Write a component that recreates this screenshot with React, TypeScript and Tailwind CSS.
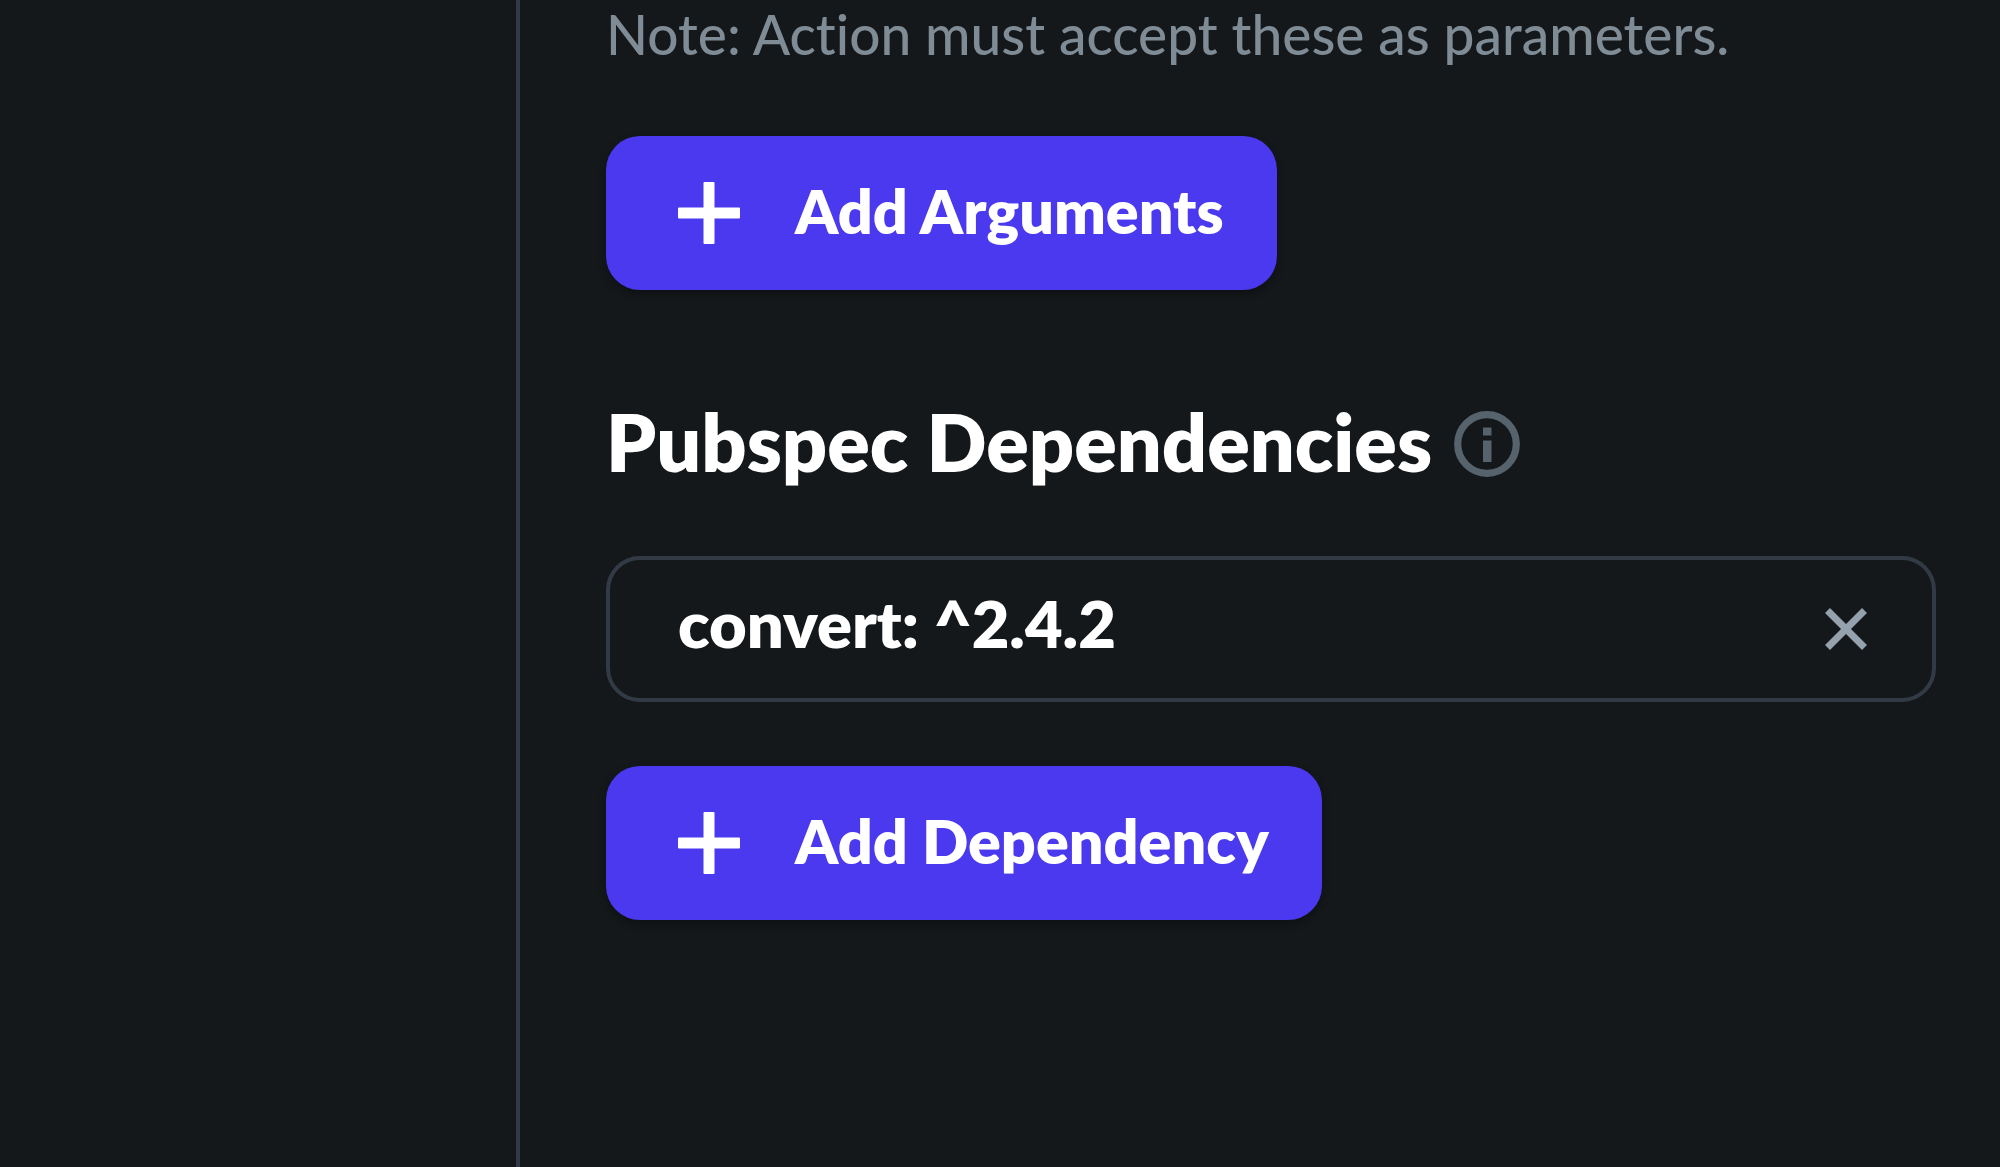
import { useState } from "react";

function PlusIcon() {
  return (
    <svg viewBox="0 0 62 62" className="size-[62px] shrink-0" fill="currentColor" aria-hidden="true">
      <rect x="0" y="25.5" width="62" height="11" rx="1" />
      <rect x="25.5" y="0" width="11" height="62" rx="1" />
    </svg>
  );
}

function AddButton({ label }: { label: string }) {
  return (
    <button
      type="button"
      className="flex h-[154px] items-center gap-[55px] rounded-[34px] bg-[#4b39ef] pr-[53px] pl-[72px] text-[61px] leading-[80px] font-extrabold whitespace-nowrap text-white shadow-[0_4px_8px_rgba(0,0,0,0.3)]"
    >
      <PlusIcon />
      <span className="pb-1">{label}</span>
    </button>
  );
}

function InfoIcon() {
  return (
    <svg viewBox="0 0 66 66" className="size-[66px]" aria-hidden="true">
      <circle cx="33" cy="33" r="29.3" fill="none" stroke="currentColor" strokeWidth="7.2" />
      <rect x="29" y="16.5" width="8.5" height="8" fill="currentColor" />
      <rect x="29" y="29.5" width="8.5" height="21.5" fill="currentColor" />
    </svg>
  );
}

function CloseIcon() {
  return (
    <svg viewBox="0 0 42 42" className="size-[42px]" aria-hidden="true">
      <path d="M2.5 2.5 39.5 39.5M39.5 2.5 2.5 39.5" fill="none" stroke="currentColor" strokeWidth="7" />
    </svg>
  );
}

export default function App() {
  const [dependency, setDependency] = useState("convert: ^2.4.2");

  return (
    <div className="flex min-h-screen bg-[#14181b] font-[Lato,sans-serif] [font-variant-ligatures:none]">
      <aside className="w-[516px] shrink-0" />
      <main className="flex min-w-0 flex-1 flex-col items-start border-l-4 border-[#323b45] pr-16 pl-[86px]">
        <p className="text-[55px] leading-[68px] font-medium text-[#7f8b95]">
          Note: Action must accept these as parameters.
        </p>
        <div className="mt-[68px]">
          <AddButton label="Add Arguments" />
        </div>

        <div className="mt-[106px] flex h-24 items-center gap-[22px]">
          <h2 className="pb-1 text-[79px] leading-[88px] font-extrabold whitespace-nowrap text-white">
            Pubspec Dependencies
          </h2>
          <button type="button" aria-label="About pubspec dependencies" className="text-[#57636c]">
            <InfoIcon />
          </button>
        </div>

        <div className="mt-16 flex h-[146px] w-full items-center rounded-[34px] border-4 border-[#323b45] pr-[65px] pl-[68px]">
          <input
            type="text"
            aria-label="Pubspec dependency"
            value={dependency}
            onChange={(e) => setDependency(e.target.value)}
            className="min-w-0 flex-1 bg-transparent pb-3 text-[65px] leading-[80px] font-extrabold text-white outline-none"
          />
          <button
            type="button"
            aria-label="Remove dependency"
            onClick={() => setDependency("")}
            className="text-[#95a1ac]"
          >
            <CloseIcon />
          </button>
        </div>

        <div className="mt-16">
          <AddButton label="Add Dependency" />
        </div>
      </main>
    </div>
  );
}
